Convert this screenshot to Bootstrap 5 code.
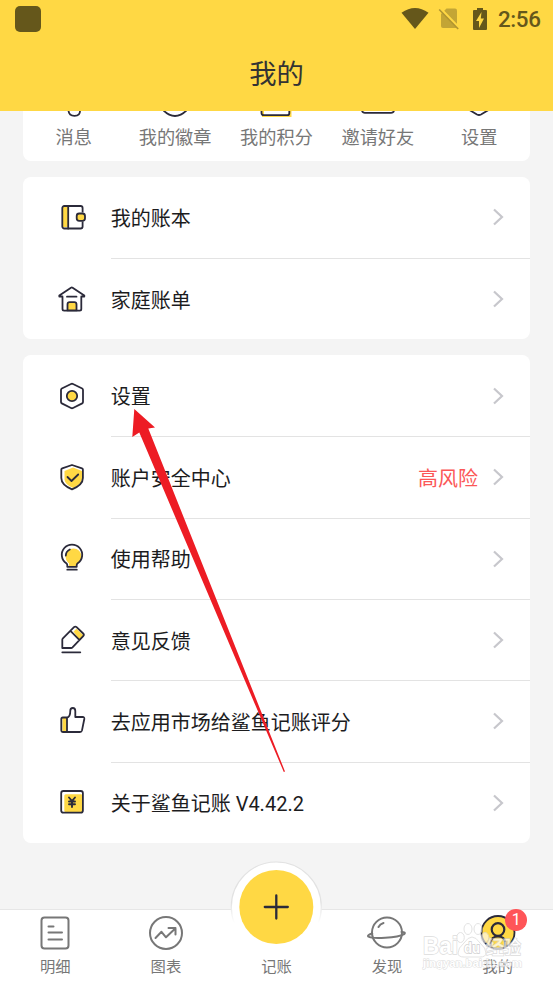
<!DOCTYPE html>
<html lang="zh-CN">
<head>
<meta charset="utf-8">
<meta name="viewport" content="width=device-width, initial-scale=1">
<title>我的</title>
<link href="https://cdn.jsdelivr.net/npm/bootstrap@5.3.0/dist/css/bootstrap.min.css" rel="stylesheet">
<style>
  body { font-family: Roboto, "Noto Sans CJK SC", sans-serif; background: #f4f4f4; color: #1c1c1e; height: 983px; }
  svg { display: block; flex: none; }
  .app-top { background: #ffd844; height: 110.5px; }
  .status-line { height: 38px; padding: 0 12.5px 0 15px; color: #65571b; }
  .app-dot { width: 26px; height: 26px; border-radius: 5px; background: #65571b; }
  .clock { font-size: 22.4px; font-weight: 500; line-height: 1; letter-spacing: -.4px; margin-left: 10.5px; }
  .page-title { font-size: 27.3px; line-height: 36px; margin-top: 19px; color: #333; }
  .panel { background: #fff; border-radius: 8px; overflow: hidden; }
  .page-body { padding: 0 23px; gap: 15.6px; }
  .quick { height: 50.5px; border-top-left-radius: 0; border-top-right-radius: 0; font-size: 18.2px; color: #777; line-height: 26px; }
  .quick svg { height: 14px; }
  .entry { height: 81.35px; padding-left: 32.7px; }
  .entry-body { margin-left: 23px; padding-right: 26px; font-size: 20px; }
  .entry-body span { padding-top: 3px; }
  .entry + .entry .entry-body { border-top: 1px solid #e3e3e3; }
  .risk { color: #fb5757; margin-right: 14px; }
  .ln { fill: none; stroke: #2b2a3a; stroke-width: 1.8; stroke-linecap: round; stroke-linejoin: round; }
  .fy { fill: #ffd844; }
  .gy { fill: none; stroke: #777; stroke-width: 2; stroke-linecap: round; stroke-linejoin: round; }
  .tabs { height: 74px; background: #fff; border-top: 1px solid #e6e6e6; font-size: 15.3px; color: #777; }
  .tabs .tab { padding-top: 3px; line-height: 22px; }
  .tab svg { margin-bottom: 3px; }
  .fab { left: 226.5px; top: -54px; transform: translateX(-6px); }
  .count { width: 21.5px; height: 21.5px; left: 63px; top: -1px; background: #ff5558; color: #fff; font-size: 16px; line-height: 21.5px; }
  .arrow { left: 0; top: 0; pointer-events: none; }
  .stamp { left: 420px; top: 915px; }
</style>
</head>
<body class="position-relative overflow-hidden d-flex flex-column">
<header class="app-top flex-shrink-0">
  <div class="status-line d-flex align-items-center justify-content-between">
    <div class="app-dot"></div>
    <div class="d-flex align-items-center">
      <svg width="28" height="24" viewBox="0 0 28 24"><path d="M.5 5.800Q14-3.600 27.500 5.800L14 22z" fill="#65571b"/></svg>
      <svg width="22" height="24" viewBox="0 0 22 24" style="margin-left:8.5px"><path d="M8.500 1.500h8.500q2 0 2 2V21H5q-2 0-2-2V7z" fill="#c3a535"/><path d="M2 1.500l19 19.500" stroke="#ffd844" stroke-width="3"/><path d="M1.200 2.500l19 19.500" stroke="#b09430" stroke-width="1.600"/></svg>
      <svg width="16" height="24" viewBox="0 0 16 24" style="margin-left:12px"><path d="M5 1h6v2h3q1 0 1 1v18q0 1-1 1H2q-1 0-1-1V4q0-1 1-1h3z" fill="#65571b"/><path d="M9.500 5L4 14h3v7l5-9.500H8.800z" fill="#ffd844"/></svg>
      <span class="clock">2:56</span>
    </div>
  </div>
  <h1 class="page-title text-center fw-normal mb-0">我的</h1>
</header>

<main class="page-body flex-grow-1 d-flex flex-column">
  <section class="panel quick row g-0 row-cols-5 text-center flex-shrink-0">
    <div class="col"><svg class="mx-auto" width="30" viewBox="0 0 30 14"><path class="ln" d="M9.500-1q0 5.800 6 5.800T21-1"/></svg>消息</div>
    <div class="col"><svg class="mx-auto" width="30" viewBox="0 0 30 14"><path class="ln" d="M3-1Q15 11 27-1"/></svg>我的徽章</div>
    <div class="col"><svg class="mx-auto" width="40" viewBox="0 0 40 14"><path d="M7 0v5h27.500V0" fill="none" stroke="#ffd844" stroke-width="2"/><path class="ln" d="M5.500-1v3q0 2.200 2.300 2.200h23.500q2 0 2-2V-1"/></svg>我的积分</div>
    <div class="col"><svg class="mx-auto" width="40" viewBox="0 0 40 14"><path class="ln" d="M4-.5q.5 2.300 3 2.300h26q2.500 0 3-2.300"/></svg>邀请好友</div>
    <div class="col"><svg class="mx-auto" width="30" viewBox="0 0 30 14"><path class="ln" d="M5.500-1l7.500 4.500q2 1 4 0L24.500-1"/></svg>设置</div>
  </section>

  <section class="panel flex-shrink-0">
    <div class="entry d-flex align-items-center">
      <svg width="32" height="32" viewBox="0 0 32 32"><path class="fy" d="M7 5h5v21H7z"/><rect class="ln" x="6.300" y="5" width="20.300" height="22.500" rx="2"/><path class="ln" d="M12.200 5.500v22"/><path d="M25 11.500h5v9h-5z" fill="#fff"/><rect class="ln" x="20.700" y="12.500" width="8.300" height="7.300" rx="2.500" style="fill:#ffd844"/></svg>
      <div class="entry-body h-100 flex-grow-1 d-flex align-items-center"><span class="flex-grow-1">我的账本</span><svg width="12" height="20" viewBox="0 0 12 20"><path d="M2 2.500l8 7.500-8 7.500" fill="none" stroke="#c7c7cc" stroke-width="2.200"/></svg></div>
    </div>
    <div class="entry d-flex align-items-center">
      <svg width="32" height="32" viewBox="0 0 32 32"><path class="ln" d="M6.500 14v12q0 1.600 1.600 1.600h15.600q1.600 0 1.600-1.600V14M6.500 13.500H3.300v-1L15 4.700q.8-.5 1.600 0l11.700 7.800v1h-3M11 13.700h9.500"/><path class="ln" d="M11.500 27.400v-6q0-2.200 2.200-2.200h4.600q2.200 0 2.200 2.200v6z" style="fill:#ffd844"/></svg>
      <div class="entry-body h-100 flex-grow-1 d-flex align-items-center"><span class="flex-grow-1">家庭账单</span><svg width="12" height="20" viewBox="0 0 12 20"><path d="M2 2.500l8 7.500-8 7.500" fill="none" stroke="#c7c7cc" stroke-width="2.200"/></svg></div>
    </div>
  </section>

  <section class="panel flex-shrink-0">
    <div class="entry d-flex align-items-center">
      <svg width="32" height="32" viewBox="0 0 32 32"><path class="ln" d="M15 4q1-.5 2 0l9.200 4.500q.8.500.8 1.400V22q0 .9-.8 1.400L17 28q-1 .5-2 0l-9.200-4.600Q5 22.900 5 22V9.900q0-.9.800-1.400z"/><circle class="ln" cx="16" cy="16" r="5.200" style="fill:#ffd844"/></svg>
      <div class="entry-body h-100 flex-grow-1 d-flex align-items-center"><span class="flex-grow-1">设置</span><svg width="12" height="20" viewBox="0 0 12 20"><path d="M2 2.500l8 7.500-8 7.500" fill="none" stroke="#c7c7cc" stroke-width="2.200"/></svg></div>
    </div>
    <div class="entry d-flex align-items-center">
      <svg width="32" height="32" viewBox="0 0 32 32"><path class="fy" d="M17 6.500l9 3.500v8q0 5-9 9-8-3.500-8.500-8.500V10z"/><path class="ln" d="M16 4l10 3.300q.9.300.9 1.200V17q0 7-10.900 11.300Q5.300 24 5.300 17V8.500q0-.9.900-1.200zM11.500 16l4 4 6.700-6.500"/></svg>
      <div class="entry-body h-100 flex-grow-1 d-flex align-items-center"><span class="flex-grow-1">账户安全中心</span><span class="risk">高风险</span><svg width="12" height="20" viewBox="0 0 12 20"><path d="M2 2.500l8 7.500-8 7.500" fill="none" stroke="#c7c7cc" stroke-width="2.200"/></svg></div>
    </div>
    <div class="entry d-flex align-items-center">
      <svg width="32" height="32" viewBox="0 0 32 32"><circle class="fy" cx="17.500" cy="14.500" r="8"/><path class="fy" d="M13 20h8v4h-8z"/><path class="ln" d="M11.300 24.800v-1.600q0-1.200-1-2A10.200 10.200 0 1 1 21.700 21.200q-1 .8-1 2v1.600zM11.300 27.700h9.500M9.800 13.500q.2-4.300 4-6"/></svg>
      <div class="entry-body h-100 flex-grow-1 d-flex align-items-center"><span class="flex-grow-1">使用帮助</span><svg width="12" height="20" viewBox="0 0 12 20"><path d="M2 2.500l8 7.500-8 7.500" fill="none" stroke="#c7c7cc" stroke-width="2.200"/></svg></div>
    </div>
    <div class="entry d-flex align-items-center">
      <svg width="32" height="32" viewBox="0 0 32 32"><path class="fy" d="M17.500 7.500l3-2.800 7 6.800-4.200 4.300z"/><path class="ln" d="M6.300 24v-8.300q0-.8.600-1.400L18 3.200q1.300-1.200 2.600 0l6.600 6.300q1.300 1.300 0 2.600L16.500 23.400q-.6.600-1.400.6zM14.700 7.200l8.600 8.600M6.300 28.300h18"/></svg>
      <div class="entry-body h-100 flex-grow-1 d-flex align-items-center"><span class="flex-grow-1">意见反馈</span><svg width="12" height="20" viewBox="0 0 12 20"><path d="M2 2.500l8 7.500-8 7.500" fill="none" stroke="#c7c7cc" stroke-width="2.200"/></svg></div>
    </div>
    <div class="entry d-flex align-items-center">
      <svg width="32" height="32" viewBox="0 0 32 32"><path class="fy" d="M6.500 13H11v14H6.500z"/><path class="ln" d="M11 12.500H6.800q-1.500 0-1.500 1.500v11.500Q5.300 27 6.800 27H24q1.600 0 2-1.600L28.300 14q.3-2-1.700-2h-7.300V6q0-3-2.500-3t-2.500 2.700Q14.300 12 11 12.500zV27"/></svg>
      <div class="entry-body h-100 flex-grow-1 d-flex align-items-center"><span class="flex-grow-1">去应用市场给鲨鱼记账评分</span><svg width="12" height="20" viewBox="0 0 12 20"><path d="M2 2.500l8 7.500-8 7.500" fill="none" stroke="#c7c7cc" stroke-width="2.200"/></svg></div>
    </div>
    <div class="entry d-flex align-items-center">
      <svg width="32" height="32" viewBox="0 0 32 32"><rect class="fy" x="8.300" y="8.300" width="18.300" height="17.800" rx="1.500"/><rect class="ln" x="5.200" y="5" width="21.700" height="21.700" rx="2.200"/><path class="ln" d="M13 11.500l3 3.500 3-3.500M13 15.500h6M13 18.200h6M16 15v6" style="stroke-width:1.900"/></svg>
      <div class="entry-body h-100 flex-grow-1 d-flex align-items-center"><span class="flex-grow-1">关于鲨鱼记账 V4.42.2</span><svg width="12" height="20" viewBox="0 0 12 20"><path d="M2 2.500l8 7.500-8 7.500" fill="none" stroke="#c7c7cc" stroke-width="2.200"/></svg></div>
    </div>
  </section>
</main>

<nav class="tabs row g-0 row-cols-5 text-center position-relative flex-shrink-0">
  <svg class="fab position-absolute p-0" width="100" height="100" viewBox="0 0 100 100">
    <defs><linearGradient id="rim" x1="0" y1="0" x2="0" y2="1"><stop offset=".45" stop-color="#e2e2e2"/><stop offset=".68" stop-color="#fff"/></linearGradient></defs>
    <circle cx="50" cy="51" r="45" fill="#fff" stroke="url(#rim)" stroke-width="1.200"/>
    <circle cx="50" cy="51" r="37" fill="#ffd844"/>
    <path d="M50 39.500v23M38.500 51h23" stroke="#2b2a3a" stroke-width="2.300" stroke-linecap="round"/>
  </svg>
  <div class="col tab"><svg class="mx-auto" width="40" height="40" viewBox="0 0 40 40"><rect class="gy" x="6.500" y="4.500" width="27" height="31" rx="3"/><path class="gy" d="M13.500 13.500h5M13.500 19.500h13.500M13.500 26.500h13.500"/></svg>明细</div>
  <div class="col tab"><svg class="mx-auto" width="40" height="40" viewBox="0 0 40 40"><circle class="gy" cx="20" cy="20" r="16"/><path class="gy" d="M9.500 25l6-6.200 4.500 5.500 9.500-9M22.500 15h7v6.500"/></svg>图表</div>
  <div class="col tab"><svg class="mx-auto" width="40" height="40" viewBox="0 0 40 40"></svg>记账</div>
  <div class="col tab"><svg class="mx-auto" width="40" height="40" viewBox="0 0 40 40"><circle class="gy" cx="20" cy="19.500" r="15"/><path class="gy" d="M5.200 20.500q-5 1.500-4 3 3 2 17 1.200 14-.7 19-3.600 2-1.800-2.700-2.200M11.500 14q1.500-3 5-4"/></svg>发现</div>
  <div class="col tab position-relative"><svg class="mx-auto" width="40" height="40" viewBox="0 0 40 40"><circle class="ln" cx="20" cy="19.500" r="16.500" style="fill:#ffd844"/><circle class="ln" cx="20" cy="16.500" r="6.300" style="stroke-width:2.200"/><path class="ln" d="M12.700 33v-3.500q.5-6 7.300-6t7.300 6V33" style="stroke-width:2.200"/></svg>我的<span class="count position-absolute rounded-circle">1</span></div>
</nav>

<svg class="stamp position-absolute" width="115" height="60" viewBox="0 0 115 60" opacity=".72">
  <g fill="#fff" stroke="#d9d9d9" stroke-width="1" fill-opacity=".85">
    <path d="M38 38q0-5 6-10 4-6 8-6t8 6q6 5 6 10 0 4-6 4H44q-6 0-6-4z"/>
    <ellipse cx="40.500" cy="22.500" rx="3.800" ry="5"/><ellipse cx="48" cy="14" rx="4" ry="5.500"/><ellipse cx="58" cy="14" rx="4" ry="5.500"/><ellipse cx="65" cy="22.500" rx="3.800" ry="5"/>
  </g>
  <g fill="#fff" stroke="#cfcfcf" stroke-width="1.400" paint-order="stroke" font-family="Liberation Sans, Noto Sans CJK SC, sans-serif" font-weight="700">
    <text x="3" y="39" font-size="24" textLength="35" lengthAdjust="spacingAndGlyphs">Bai</text>
    <text x="44" y="38" font-size="14" textLength="16" lengthAdjust="spacingAndGlyphs" stroke="#bbb">du</text>
    <text x="66" y="39" font-size="18" textLength="35" font-weight="500">经验</text>
    <text x="3" y="52" font-size="11.500" textLength="99" lengthAdjust="spacingAndGlyphs" stroke-width="1">jingyan.baidu.com</text>
  </g>
</svg>

<svg class="arrow position-absolute" width="553" height="983" viewBox="0 0 553 983"><path d="M134.300 409L155 427.500l-6.700 1L285 771.500l-1.200.5L139.300 432.500l-7 4.500z" fill="#ed1c24"/></svg>
<script src="https://cdn.jsdelivr.net/npm/bootstrap@5.3.0/dist/js/bootstrap.bundle.min.js"></script>
</body>
</html>
